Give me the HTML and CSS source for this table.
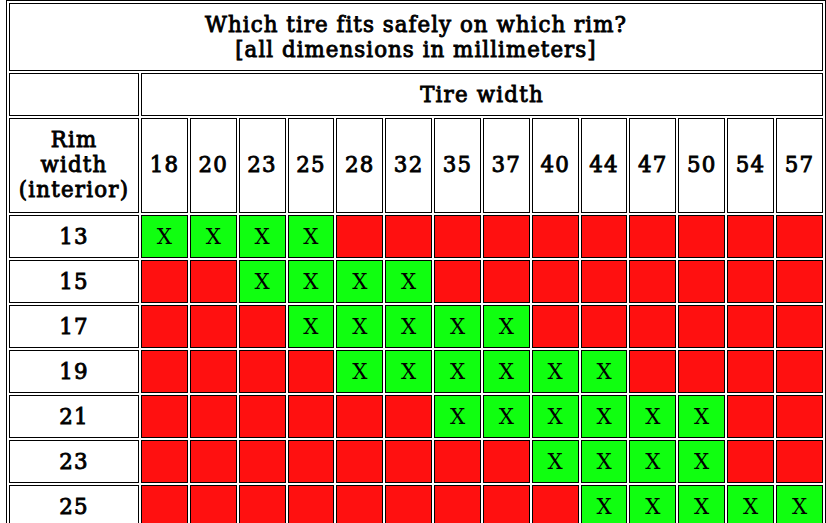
FILE: index.html
```html
<!DOCTYPE html>
<html>
<head>
<meta charset="utf-8">
<link rel="stylesheet" href="styles.css">
</head>
<body>
<table class="fit">
<colgroup><col class="c-rim"><col span="14"></colgroup>
<tr><th colspan="15" class="title">Which tire fits safely on which rim?<br>[all dimensions in millimeters]</th></tr>
<tr><th></th><th colspan="14">Tire width</th></tr>
<tr class="heads"><th>Rim<br>width<br>(interior)</th><th>18</th><th>20</th><th>23</th><th>25</th><th>28</th><th>32</th><th>35</th><th>37</th><th>40</th><th>44</th><th>47</th><th>50</th><th>54</th><th>57</th></tr>
<tr><th>13</th><td class="y">X</td><td class="y">X</td><td class="y">X</td><td class="y">X</td><td class="n"></td><td class="n"></td><td class="n"></td><td class="n"></td><td class="n"></td><td class="n"></td><td class="n"></td><td class="n"></td><td class="n"></td><td class="n"></td></tr>
<tr><th>15</th><td class="n"></td><td class="n"></td><td class="y">X</td><td class="y">X</td><td class="y">X</td><td class="y">X</td><td class="n"></td><td class="n"></td><td class="n"></td><td class="n"></td><td class="n"></td><td class="n"></td><td class="n"></td><td class="n"></td></tr>
<tr><th>17</th><td class="n"></td><td class="n"></td><td class="n"></td><td class="y">X</td><td class="y">X</td><td class="y">X</td><td class="y">X</td><td class="y">X</td><td class="n"></td><td class="n"></td><td class="n"></td><td class="n"></td><td class="n"></td><td class="n"></td></tr>
<tr><th>19</th><td class="n"></td><td class="n"></td><td class="n"></td><td class="n"></td><td class="y">X</td><td class="y">X</td><td class="y">X</td><td class="y">X</td><td class="y">X</td><td class="y">X</td><td class="n"></td><td class="n"></td><td class="n"></td><td class="n"></td></tr>
<tr><th>21</th><td class="n"></td><td class="n"></td><td class="n"></td><td class="n"></td><td class="n"></td><td class="n"></td><td class="y">X</td><td class="y">X</td><td class="y">X</td><td class="y">X</td><td class="y">X</td><td class="y">X</td><td class="n"></td><td class="n"></td></tr>
<tr><th>23</th><td class="n"></td><td class="n"></td><td class="n"></td><td class="n"></td><td class="n"></td><td class="n"></td><td class="n"></td><td class="n"></td><td class="y">X</td><td class="y">X</td><td class="y">X</td><td class="y">X</td><td class="n"></td><td class="n"></td></tr>
<tr><th>25</th><td class="n"></td><td class="n"></td><td class="n"></td><td class="n"></td><td class="n"></td><td class="n"></td><td class="n"></td><td class="n"></td><td class="n"></td><td class="y">X</td><td class="y">X</td><td class="y">X</td><td class="y">X</td><td class="y">X</td></tr>
</table>
</body>
</html>
```
FILE: styles.css
```css
body {
  margin: 0;
  background: #fff;
}
.fit {
  margin-left: 6px;
  width: 820px;
  table-layout: fixed;
  border: 1px solid #000;
  border-spacing: 2px;
  font-family: "DejaVu Serif", serif;
  font-size: 16pt;
  color: #000;
}
.c-rim {
  width: 130px;
}
.fit th, .fit td {
  border: 1px solid #000;
  padding: 8px 0;
  text-align: center;
  white-space: nowrap;
}
.fit th {
  font-weight: normal;
  -webkit-text-stroke: 0.9px #000;
  letter-spacing: 1.2px;
}
.fit .title {
  letter-spacing: 1.05px;
}
.fit .heads th {
  padding-bottom: 9.5px;
}
.fit td {
  font-weight: normal;
}
.fit .y {
  background: #10ff10;
}
.fit .n {
  background: #ff1010;
}
```
